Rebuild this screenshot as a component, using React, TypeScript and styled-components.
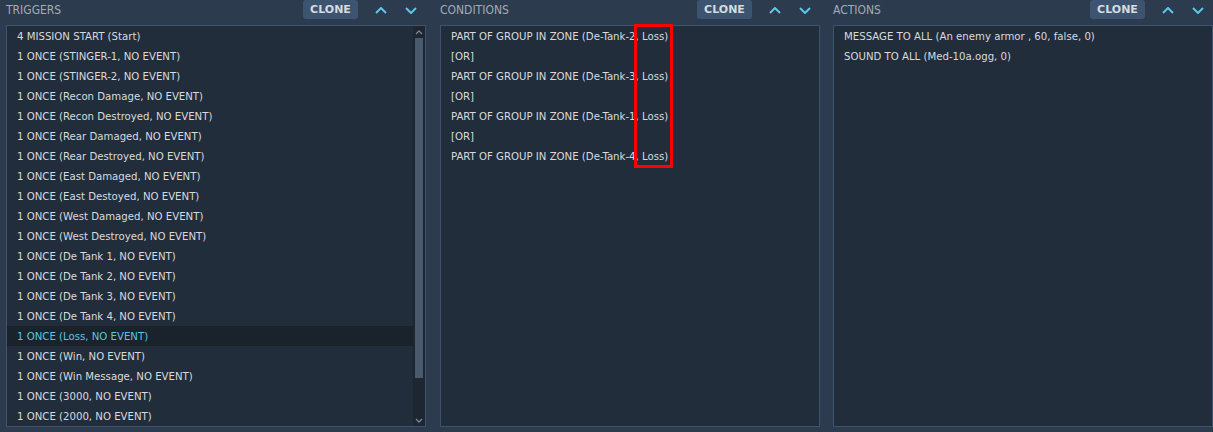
import React from "react";
import styled, { createGlobalStyle } from "styled-components";

const Global = createGlobalStyle`
  html, body { margin: 0; padding: 0; background: #2c3b4e; }
  body { font-family: "DejaVu Sans Condensed", "DejaVu Sans", "Liberation Sans", sans-serif; overflow: hidden; }
`;

const Page = styled.div`
  display: flex;
  align-items: flex-start;
  height: 432px;
  width: 1213px;
  padding-left: 6px;
  box-sizing: border-box;
  background: #2c3b4e;
`;

const Panel = styled.section<{ $w: number; $gap: number }>`
  width: ${(p) => p.$w}px;
  margin-right: ${(p) => p.$gap}px;
  display: flex;
  flex-direction: column;
  flex-shrink: 0;
`;

const Header = styled.div`
  height: 25px;
  display: flex;
  align-items: flex-start;
`;

const Title = styled.div`
  flex: 1;
  color: #a3acb6;
  font-size: 12px;
  line-height: 21px;
`;

const CloneButton = styled.button`
  width: 55px;
  height: 19px;
  margin: 0 8px 0 0;
  padding: 0;
  border: none;
  border-radius: 3px;
  background: #3d5470;
  color: #d6dbe0;
  font-family: "DejaVu Sans", sans-serif;
  font-weight: bold;
  font-size: 11px;
  line-height: 20px;
  text-align: center;
`;

const ArrowButton = styled.button`
  width: 30px;
  height: 20px;
  padding: 0;
  border: none;
  background: transparent;
  display: flex;
  align-items: center;
  justify-content: center;
  color: #5ec6e6;
`;

const Box = styled.div`
  position: relative;
  height: 402px;
  box-sizing: border-box;
  border: 1px solid #3f536c;
  background: #222d3b;
  display: flex;
`;

const List = styled.div`
  flex: 1;
  overflow: hidden;
`;

const Row = styled.div<{ $selected?: boolean }>`
  height: 20px;
  line-height: 21px;
  padding-left: 10px;
  font-size: 11.3px;
  white-space: nowrap;
  color: ${(p) => (p.$selected ? "#5ec4e2" : "#d7dade")};
  background: ${(p) => (p.$selected ? "#1a222c" : "transparent")};
`;

const ScrollBar = styled.div`
  width: 12px;
  background: #1d2631;
  display: flex;
  flex-direction: column;
  align-items: center;
`;

const ScrollArrow = styled.div`
  height: 12px;
  width: 12px;
  display: flex;
  align-items: center;
  justify-content: center;
  color: #7b8693;
`;

const Thumb = styled.div`
  width: 8px;
  height: 340px;
  background: #4a5a6d;
`;

const Track = styled.div`
  flex: 1;
`;

const Highlight = styled.div`
  position: absolute;
  left: 193px;
  top: -2px;
  width: 39px;
  height: 144px;
  box-sizing: border-box;
  border: 3px solid #ff0000;
  pointer-events: none;
`;

const Chevron = ({ up, w = 12, h = 7, sw = 2 }: { up?: boolean; w?: number; h?: number; sw?: number }) => (
  <svg width={w} height={h} viewBox={`0 0 ${w} ${h}`}>
    <polyline
      points={up ? `1,${h - 1} ${w / 2},1 ${w - 1},${h - 1}` : `1,1 ${w / 2},${h - 1} ${w - 1},1`}
      fill="none"
      stroke="currentColor"
      strokeWidth={sw}
    />
  </svg>
);

const PanelHeader = ({ title }: { title: string }) => (
  <Header>
    <Title>{title}</Title>
    <CloneButton>CLONE</CloneButton>
    <ArrowButton>
      <Chevron up />
    </ArrowButton>
    <ArrowButton>
      <Chevron />
    </ArrowButton>
  </Header>
);

const triggers = [
  "4 MISSION START (Start)",
  "1 ONCE (STINGER-1, NO EVENT)",
  "1 ONCE (STINGER-2, NO EVENT)",
  "1 ONCE (Recon Damage, NO EVENT)",
  "1 ONCE (Recon Destroyed, NO EVENT)",
  "1 ONCE (Rear Damaged, NO EVENT)",
  "1 ONCE (Rear Destroyed, NO EVENT)",
  "1 ONCE (East Damaged, NO EVENT)",
  "1 ONCE (East Destoyed, NO EVENT)",
  "1 ONCE (West Damaged, NO EVENT)",
  "1 ONCE (West Destroyed, NO EVENT)",
  "1 ONCE (De Tank 1, NO EVENT)",
  "1 ONCE (De Tank 2, NO EVENT)",
  "1 ONCE (De Tank 3, NO EVENT)",
  "1 ONCE (De Tank 4, NO EVENT)",
  "1 ONCE (Loss, NO EVENT)",
  "1 ONCE (Win, NO EVENT)",
  "1 ONCE (Win Message, NO EVENT)",
  "1 ONCE (3000, NO EVENT)",
  "1 ONCE (2000, NO EVENT)",
];

const conditions = [
  "PART OF GROUP IN ZONE (De-Tank-2, Loss)",
  "[OR]",
  "PART OF GROUP IN ZONE (De-Tank-3, Loss)",
  "[OR]",
  "PART OF GROUP IN ZONE (De-Tank-1, Loss)",
  "[OR]",
  "PART OF GROUP IN ZONE (De-Tank-4, Loss)",
];

const actions = ["MESSAGE TO ALL (An enemy armor , 60, false, 0)", "SOUND TO ALL (Med-10a.ogg, 0)"];

export default function App() {
  return (
    <>
      <Global />
      <Page>
        <Panel $w={420} $gap={14}>
          <PanelHeader title="TRIGGERS" />
          <Box>
            <List>
              {triggers.map((t, i) => (
                <Row key={i} $selected={i === 15}>
                  {t}
                </Row>
              ))}
            </List>
            <ScrollBar>
              <ScrollArrow>
                <Chevron up w={8} h={5} sw={1.3} />
              </ScrollArrow>
              <Thumb />
              <Track />
              <ScrollArrow>
                <Chevron w={8} h={5} sw={1.3} />
              </ScrollArrow>
            </ScrollBar>
          </Box>
        </Panel>
        <Panel $w={380} $gap={13}>
          <PanelHeader title="CONDITIONS" />
          <Box>
            <List>
              {conditions.map((t, i) => (
                <Row key={i}>{t}</Row>
              ))}
            </List>
            <Highlight />
          </Box>
        </Panel>
        <Panel $w={380} $gap={0}>
          <PanelHeader title="ACTIONS" />
          <Box>
            <List>
              {actions.map((t, i) => (
                <Row key={i}>{t}</Row>
              ))}
            </List>
          </Box>
        </Panel>
      </Page>
    </>
  );
}
